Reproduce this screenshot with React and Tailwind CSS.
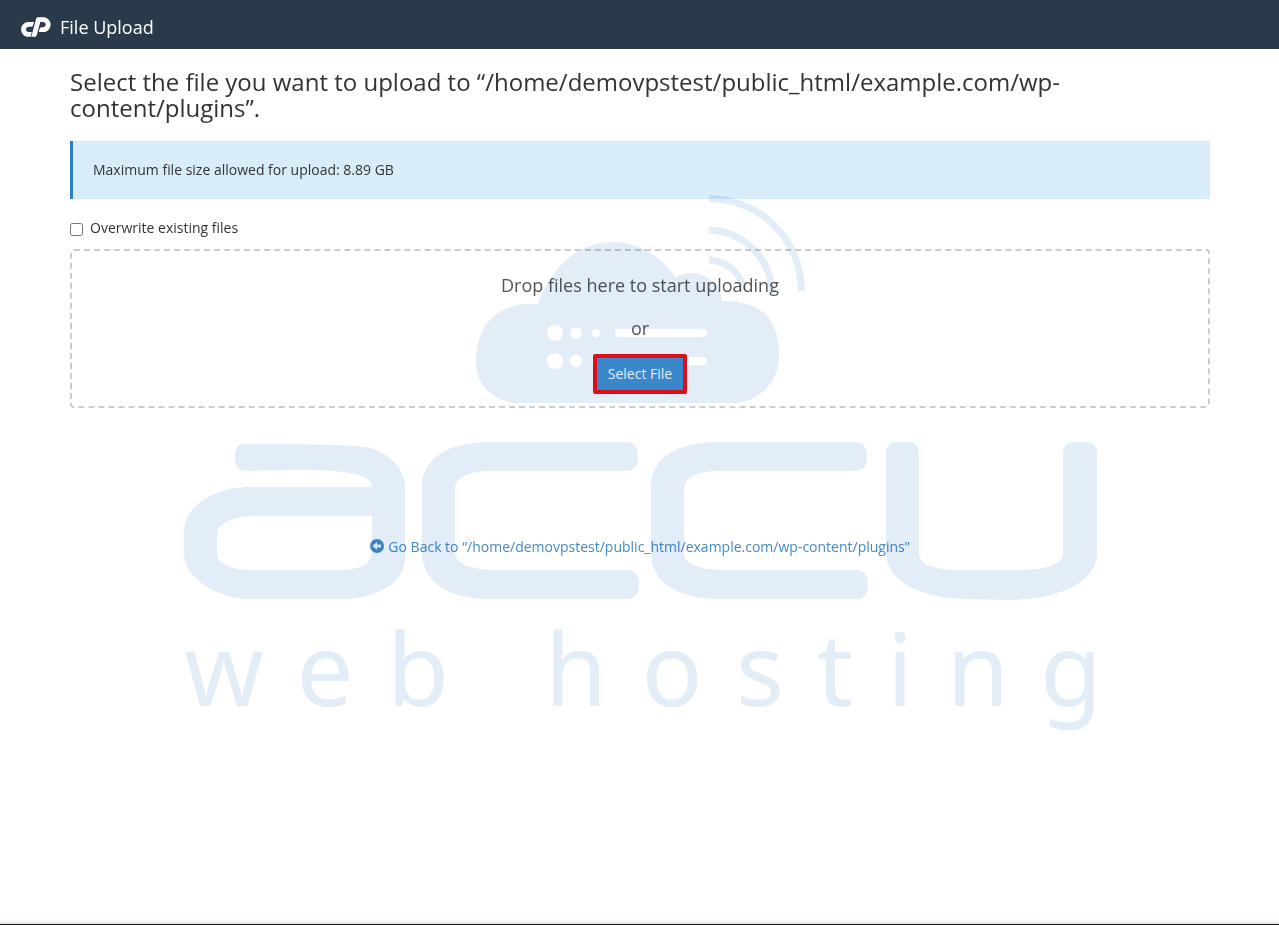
const UPLOAD_DIR = '/home/demovpstest/public_html/example.com/wp-content/plugins';

function CpanelMark({ className }) {
  return (
    <svg viewBox="0 178 214 143" fill="currentColor" className={className} aria-hidden="true">
      <path d="M210.3 220.2c-5.6-24.8-26.9-41.2-51-41.2h-37c-7.1 0-12.5 4.5-14.3 10.9L73.1 320l24.7-.1c6.8 0 12.3-4.5 14.2-10.7l25.8-95.7h19.8c8.4 0 16.2 5.6 18.3 14.8 2.5 10.9-5.9 22.6-18.3 22.6h-10.3c-7 0-12.5 4.6-14.3 10.8l-6.4 23.8h32c37.2 0 58.3-36.2 51.7-65.3z" />
      <path d="M53.8 248h18.6c6.9 0 12.4-4.4 14.3-10.9l6.2-23.6h-40c-34 0-60 33-50.5 65.8C8.6 303.7 30 320 51.5 320h16.4l9-34H53.5c-12 0-20-11-18-21.5 2-9.5 9-16.5 18.3-16.5z" />
    </svg>
  );
}

function BackIcon({ className }) {
  return (
    <svg viewBox="0 0 14 14" className={className} aria-hidden="true">
      <circle cx="7" cy="7" r="7" fill="currentColor" />
      <path d="M2.5 7 7 3V5.5h4v3H7V11z" fill="#f4f9fd" />
    </svg>
  );
}

function Watermark({ className }) {
  return (
    <svg viewBox="171 190 937 560" fill="#e2edf7" className={className} aria-hidden="true">
      {/* cloud */}
      <path d="M515 403H738C762 399 779 380 779 357C779 320 764 301 722 301C719 282 706 273 690 273Q682 273 676 277C658 254 638 242 613 242C577 242 552 267 538 304C498 302 476 324 476 362C476 384 491 400 515 403Z" />
      <g fill="none" stroke="#e2edf7" strokeWidth="7">
        <path d="M709 198.5A92.5 92.5 0 0 1 801.5 291" />
        <path d="M709 230A65 65 0 0 1 772 291" />
        <path d="M709 260A35 33 0 0 1 743 291" />
      </g>
      <g fill="#fff">
        <circle cx="555" cy="333" r="8" />
        <circle cx="576" cy="333" r="6" />
        <circle cx="596" cy="333" r="4" />
        <rect x="615" y="329" width="92" height="8" rx="4" />
        <circle cx="555" cy="361" r="8" />
        <circle cx="576" cy="361" r="6" />
        <circle cx="596" cy="361" r="4" />
        <rect x="615" y="357" width="92" height="8" rx="4" />
      </g>
      {/* brand mark */}
      <path
        fillRule="evenodd"
        d="M244 444C290 443.5 346 444.5 367 447C390 453 405 469 405 487V558C405 581 380 599 340 599H250C216 599 184 577 184 554V532C184 505 216 487 250 487H372C372 474 345 470 300 470L246 471Q235 471 235 457Q235 444 244 444ZM372 516H252C235 516 217 524 217 533V554C217 564 232 570 252 570H337C361 570 372 565 372 548Z"
      />
      <path id="mark-arm" d="M626 442Q638 442 638 457Q638 471 626 471H490C466 471 455 479 455 489V553C455 564 471 570 498 570H627Q639 570 639 585Q639 599 626 599H490C446 599 422 580 422 553V487C422 458 448 442 490 442Z" />
      <use href="#mark-arm" x="229" />
      <path d="M886 454Q886 442 898 442H907Q919 442 919 454V553C919 565 934 570 962 570H1017C1045 570 1063 565 1063 553V454Q1063 442 1075 442H1085Q1097 442 1097 454V553C1097 582 1059 600 1007 600L967 599C920 599 886 580 886 553Z" />
      <text
        x="224 325 418 480 576 672 760 835 900 978 1071"
        y="706"
        textAnchor="middle"
        fontSize="101"
        className="font-['Noto_Sans',sans-serif]"
      >
        web hosting
      </text>
    </svg>
  );
}

export default function App() {
  return (
    <div className="relative flex min-h-screen flex-col overflow-hidden bg-white font-['Open_Sans',sans-serif] text-sm leading-5 text-[#333]">
      <header className="flex h-[49px] items-center gap-[9px] bg-[#2a3a4b] px-[21px] pt-[5px] text-white">
        <CpanelMark className="h-5 w-[30px]" />
        <span className="text-lg leading-6">File Upload</span>
      </header>

      <main className="grow pt-5 pr-[69px] pl-[70px]">
        <h1 className="text-2xl leading-[26px]">Select the file you want to upload to “{UPLOAD_DIR}”.</h1>

        <div className="mt-5 border-l-3 border-[#2f80c3] bg-[#d8edf8] px-5 py-[19px]">
          Maximum file size allowed for upload: 8.89 GB
        </div>

        <div className="mt-[19px] flex items-center gap-[7px]">
          <input id="overwrite" type="checkbox" className="mt-0.5 size-[13px]" />
          <label htmlFor="overwrite">Overwrite existing files</label>
        </div>

        <section className="mt-[11px] flex flex-col items-center rounded border-2 border-dashed border-[#ccc] pt-[22px] pb-3 text-lg leading-6 text-[#555]">
          <p>Drop files here to start uploading</p>
          <p className="mt-[19px]">or</p>
          <button
            type="button"
            className="relative z-10 mt-3.5 rounded-xs border-4 border-[#dd0f18] bg-[#3a87cb] px-[11px] py-1.5 text-sm leading-5 text-[#e2edf7]"
          >
            Select File
          </button>
        </section>

        <p className="mt-[129px] text-center">
          <a href="#back" className="inline-flex items-center gap-1 text-[#428bca]">
            <BackIcon className="mb-0.5 size-3.5" />
            Go Back to “{UPLOAD_DIR}”
          </a>
        </p>
      </main>

      <footer className="h-1.5 border-b border-[#111] bg-linear-to-b from-white to-[#e8e8e8]" />

      <div className="pointer-events-none absolute inset-x-0 top-[190px] flex justify-center mix-blend-multiply">
        <Watermark className="w-[937px]" />
      </div>
    </div>
  );
}
